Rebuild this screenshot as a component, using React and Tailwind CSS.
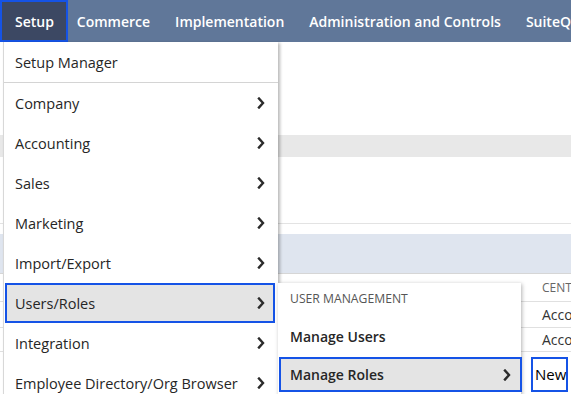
import React from "react";

const Chevron = () => (
  <svg width="8" height="12" viewBox="0 0 8 12" className="shrink-0">
    <path d="M2 1.5 L6 6 L2 10.5" fill="none" stroke="#2b2b2b" strokeWidth="2.4" strokeLinecap="square" />
  </svg>
);

const items = [
  "Company",
  "Accounting",
  "Sales",
  "Marketing",
  "Import/Export",
  "Users/Roles",
  "Integration",
  "Employee Directory/Org Browser",
];

export default function App() {
  return (
    <div
      className="relative w-[571px] h-[394px] overflow-hidden bg-white"
      style={{ fontFamily: '"Open Sans", "Liberation Sans", sans-serif' }}
    >
      {/* Nav bar */}
      <div className="flex h-[42px] items-stretch bg-[#607799] text-white text-[14px] font-semibold whitespace-nowrap">
        <div className="flex w-[69px] items-center pl-[13px] bg-[#3c4863] border-2 border-[#1553e6]">Setup</div>
        <div className="flex items-center gap-[25px] ml-[9px]">
          <span>Commerce</span>
          <span>Implementation</span>
          <span>Administration and Controls</span>
          <span>SuiteQ</span>
        </div>
      </div>

      {/* Background page */}
      <div className="flex flex-col">
        <div className="h-[93px]" />
        <div className="h-[22px] bg-[#e8e8e8]" />
        <div className="h-[66px]" />
        <div className="h-px bg-[#e3e3e3]" />
        <div className="h-[10px]" />
        <div className="h-[39px] bg-[#dfe5ef]" />
        <div className="h-px bg-[#d6d6d6]" />
        <div className="flex h-[27px] items-center pl-[542px] text-[12px] text-[#666] whitespace-nowrap">CENTER</div>
        <div className="h-px bg-[#e0e0e0]" />
        <div className="flex h-[25px] items-center pl-[542px] text-[14px] text-[#333] whitespace-nowrap">Accounting</div>
        <div className="h-px bg-[#e0e0e0]" />
        <div className="flex h-[23px] items-center pl-[542px] text-[14px] text-[#333] whitespace-nowrap">Accounting</div>
        <div className="h-px bg-[#e0e0e0]" />
        <div className="flex pl-[531px] pt-[5px]">
          <div className="flex h-[35px] w-[37px] items-center border-2 border-[#1553e6] pl-[2px] text-[15px] text-black">New</div>
        </div>
      </div>

      {/* Dropdown menu */}
      <div className="absolute left-[3px] top-[42px] w-[275px] bg-white border-l border-[#d8d8d8] shadow-[2px_1px_3px_rgba(0,0,0,0.28)] text-[14.5px] text-[#262626]">
        <div className="flex h-[41px] items-center border-b border-[#d4d4d4] pl-[11px] pt-[2px]">Setup Manager</div>
        {items.map((label) => {
          const active = label === "Users/Roles";
          return (
            <div
              key={label}
              className={
                active
                  ? "ml-[1px] mr-[3px] flex h-[40px] items-center justify-between border-2 border-[#1553e6] bg-[#e4e4e4] px-[8px]"
                  : "ml-[1px] mr-[3px] flex h-[40px] items-center justify-between border-2 border-transparent px-[8px]"
              }
            >
              <span className="whitespace-nowrap pt-[2px]">{label}</span>
              <Chevron />
            </div>
          );
        })}
      </div>

      {/* Submenu */}
      <div className="absolute left-[278px] top-[283px] w-[243px] h-[120px] bg-white shadow-[1px_1px_4px_rgba(0,0,0,0.3)]">
        <div className="flex h-[33px] items-center pl-[12px] text-[12.2px] text-[#555] whitespace-nowrap">USER MANAGEMENT</div>
        <div className="flex h-[41px] items-center pl-[12px] text-[14px] font-semibold text-[#262626] whitespace-nowrap">Manage Users</div>
        <div className="ml-[1px] flex h-[35px] w-[243px] items-center justify-between border-2 border-[#1553e6] bg-[#e4e4e4] pl-[9px] pr-[9px] text-[14px] font-semibold text-[#262626] whitespace-nowrap">
          <span>Manage Roles</span>
          <Chevron />
        </div>
      </div>
    </div>
  );
}
